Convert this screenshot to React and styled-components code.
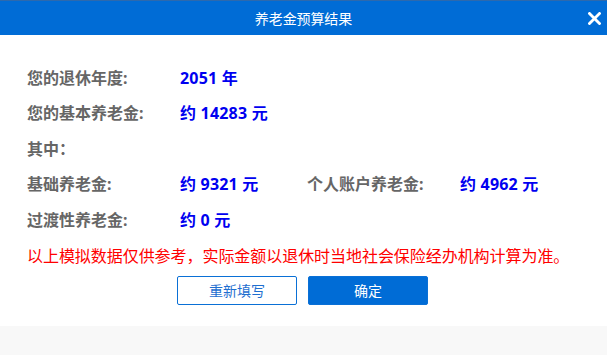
import React from 'react'
import styled, { createGlobalStyle } from 'styled-components'

const GlobalStyle = createGlobalStyle`
  html, body {
    margin: 0;
    padding: 0;
    background: #f8f8f8;
  }
  body {
    font-family: "Noto Sans", "Noto Sans CJK SC", sans-serif;
  }
`

const Page = styled.div`
  width: 100%;
  min-height: 100vh;
  background: #f8f8f8;
`

const Header = styled.div`
  position: relative;
  height: 34px;
  border-top: 1px solid #2d69ad;
  background: #006cd6;
  display: flex;
  align-items: center;
  justify-content: center;
  color: #fff;
  font-size: 14px;
  letter-spacing: -0.1px;
`

const Close = styled.button`
  position: absolute;
  right: 6px;
  top: 11px;
  width: 13px;
  height: 13px;
  padding: 0;
  border: 0;
  background: none;
  cursor: pointer;
  display: flex;
`

const Body = styled.div`
  background: #fff;
  padding: 24px 0 21px 27px;
`

const Rows = styled.div`
  display: grid;
  grid-template-columns: 153px 127px 153px auto;
  grid-auto-rows: 35.5px;
  align-items: center;
  font-size: 16px;
  font-weight: 700;
`

const Label = styled.div`
  color: #666;
  grid-column: ${p => p.col || 1};
  white-space: nowrap;
`

const Value = styled.div`
  color: #0000f0;
  grid-column: ${p => p.col || 2} / span ${p => p.span || 1};
  white-space: nowrap;
  letter-spacing: 0.2px;
`

const Note = styled.p`
  margin: 9px 0 0;
  line-height: 20px;
  font-size: 16px;
  letter-spacing: -0.05px;
  color: #f00;
  white-space: nowrap;
`

const Actions = styled.div`
  display: flex;
  justify-content: center;
  gap: 11px;
  margin: 10px 0 0 -29px;
`

const Button = styled.button`
  width: 120px;
  height: 29px;
  border-radius: 2px;
  border: 1px solid #0a70d6;
  background: ${p => (p.primary ? '#006cd6' : '#fff')};
  color: ${p => (p.primary ? '#fff' : '#1f6fd0')};
  font-family: inherit;
  font-size: 14px;
  font-weight: 400;
  cursor: pointer;
`

const rows = [
  { label: '您的退休年度:', value: '2051 年' },
  { label: '您的基本养老金:', value: '约 14283 元' },
  { label: '其中：' },
]

export default function App() {
  return (
    <Page>
      <GlobalStyle />
      <Header>
        养老金预算结果
        <Close aria-label="关闭">
          <svg width="13" height="13" viewBox="0 0 13 13">
            <path d="M1.5 1.5 L11.5 11.5 M11.5 1.5 L1.5 11.5" stroke="#fff" strokeWidth="2.8" strokeLinecap="square" />
          </svg>
        </Close>
      </Header>
      <Body>
        <Rows>
          {rows.map(r => (
            <React.Fragment key={r.label}>
              <Label>{r.label}</Label>
              <Value span={3}>{r.value}</Value>
            </React.Fragment>
          ))}
          <Label>基础养老金:</Label>
          <Value>约 9321 元</Value>
          <Label col={3}>个人账户养老金:</Label>
          <Value col={4}>约 4962 元</Value>
          <Label>过渡性养老金:</Label>
          <Value span={3}>约 0 元</Value>
        </Rows>
        <Note>以上模拟数据仅供参考，实际金额以退休时当地社会保险经办机构计算为准。</Note>
        <Actions>
          <Button>重新填写</Button>
          <Button primary>确定</Button>
        </Actions>
      </Body>
    </Page>
  )
}
